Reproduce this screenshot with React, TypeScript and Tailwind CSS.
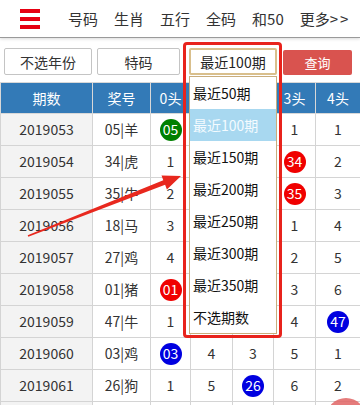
import React from "react";

type Cell = number | string | { n: string; color: string };

const GREEN = "bg-[#008000]";
const RED = "bg-[#f00000]";
const BLUE = "bg-[#0000e0]";

// 1头 / 2头 of the first rows sit under the open dropdown, so they are left blank
const rows: { qi: string; jh: string; cells: Cell[] }[] = [
  { qi: "2019053", jh: "05|羊", cells: [{ n: "05", color: GREEN }, "", "", 1, 1] },
  { qi: "2019054", jh: "34|虎", cells: [1, "", "", { n: "34", color: RED }, 2] },
  { qi: "2019055", jh: "35|牛", cells: [2, "", "", { n: "35", color: RED }, 3] },
  { qi: "2019056", jh: "18|马", cells: [3, "", "", 1, 4] },
  { qi: "2019057", jh: "27|鸡", cells: [4, "", "", 2, 5] },
  { qi: "2019058", jh: "01|猪", cells: [{ n: "01", color: RED }, "", "", 3, 6] },
  { qi: "2019059", jh: "47|牛", cells: [1, "", "", 4, { n: "47", color: BLUE }] },
  { qi: "2019060", jh: "03|鸡", cells: [{ n: "03", color: BLUE }, 4, 3, 5, 1] },
  { qi: "2019061", jh: "26|狗", cells: [1, 5, { n: "26", color: BLUE }, 6, 2] },
  { qi: "", jh: "", cells: ["", "", "", "", ""] },
];

const periods = ["最近50期", "最近100期", "最近150期", "最近200期", "最近250期", "最近300期", "最近350期", "不选期数"];

const navItems = ["号码", "生肖", "五行", "全码", "和50"];

export default function App() {
  return (
    <div
      className="relative w-[360px] h-[405px] overflow-hidden bg-white text-[#333]"
      style={{ fontFamily: '"Noto Sans CJK SC", "Noto Sans", sans-serif' }}
    >
      {/* top nav */}
      <nav className="flex items-center h-[38px] border-b border-[#9a9a9a] shadow-[0_1px_3px_rgba(0,0,0,0.15)]">
        <div className="ml-[20px] flex flex-col gap-[4px] w-[20px]">
          <span className="block h-[4px] bg-[#e60012]" />
          <span className="block h-[4px] bg-[#e60012]" />
          <span className="block h-[4px] bg-[#e60012]" />
        </div>
        <div className="ml-[28px] flex items-center gap-[16px] text-[15px] leading-none">
          {navItems.map((t) => (
            <span key={t}>{t}</span>
          ))}
          <span>
            更多<span className="tracking-[2px]">&gt;&gt;</span>
          </span>
        </div>
      </nav>

      {/* filter row */}
      <div className="flex items-end mt-[10px] pl-[4px] text-[14px] leading-none">
        <button className="w-[88px] h-[27px] border border-[#c4c4c4] rounded-[2px] bg-white">不选年份</button>
        <button className="ml-[5px] w-[83px] h-[27px] border border-[#c4c4c4] rounded-[2px] bg-white">特码</button>
        <div className="ml-[9px] w-[88px] h-[27px] border-2 border-[#d9bf8c] rounded-[2px] bg-white flex items-center justify-center text-[#222]">
          最近100期
        </div>
        <button className="ml-[6px] w-[69px] h-[25px] rounded-[2px] bg-[#d9534f] text-white text-[13px]">查询</button>
      </div>

      {/* table */}
      <table className="mt-[7px] w-[360px] table-fixed border-collapse text-[14px] text-center">
        <colgroup>
          <col className="w-[92px]" />
          <col className="w-[58px]" />
          <col className="w-[40px]" />
          <col className="w-[42px]" />
          <col className="w-[41px]" />
          <col className="w-[42px]" />
          <col className="w-[45px]" />
        </colgroup>
        <thead>
          <tr className="h-[31px] bg-[#337ab7] text-white">
            {["期数", "奖号", "0头", "1头", "2头", "3头", "4头"].map((h) => (
              <th key={h} className="font-normal border border-[#d8d8d8] p-0">
                {h}
              </th>
            ))}
          </tr>
        </thead>
        <tbody>
          {rows.map((r, ri) => (
            <tr key={ri} className="h-[32px]">
              <td className="border border-[#d4d4d4] bg-[#f3f3f3] p-0">{r.qi}</td>
              <td className="border border-[#d4d4d4] p-0">{r.jh}</td>
              {r.cells.map((c, i) => (
                <td key={i} className="border border-[#d4d4d4] p-0">
                  {typeof c === "object" ? (
                    <span className={`inline-flex items-center justify-center w-[22px] h-[22px] rounded-full text-white ${c.color}`}>
                      {c.n}
                    </span>
                  ) : (
                    c
                  )}
                </td>
              ))}
            </tr>
          ))}
        </tbody>
      </table>

      {/* open dropdown list */}
      <ul className="absolute left-[189px] top-[76px] w-[88px] border border-[#c9ad7c] bg-white text-[14px]">
        {periods.map((p) => (
          <li
            key={p}
            className={`h-[32px] flex items-center pl-[3px] ${p === "最近100期" ? "bg-[#a8d8f0] text-[#f4fbff]" : "text-[#111]"}`}
          >
            {p}
          </li>
        ))}
      </ul>

      {/* red annotation box */}
      <div className="absolute left-[183px] top-[42px] w-[99px] h-[296px] border-[3px] border-[#e8231c] rounded-[4px]" />

      {/* red arrow */}
      <svg className="absolute left-0 top-0 pointer-events-none" width="360" height="405" viewBox="0 0 360 405">
        <polygon
          points="27.7,235.3 163.3,180.2 161.5,175.5 181,176 166.9,189.5 165.1,184.8 28.3,236.7"
          fill="#e8281e"
        />
      </svg>

      {/* floating button */}
      <div className="absolute left-[326px] top-[398px] w-[40px] h-[40px] rounded-full bg-[#e06464]/85" />
    </div>
  );
}
